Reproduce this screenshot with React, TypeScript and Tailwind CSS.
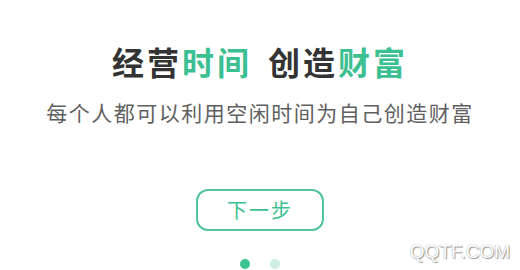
export default function App() {
  return (
    <div
      className="relative w-[520px] h-[270px] bg-white overflow-hidden flex flex-col items-center"
      style={{ fontFamily: '"Noto Sans CJK SC", "Noto Sans", sans-serif' }}
    >
      <h1 className="mt-[39px] text-[32px] leading-[44px] font-bold tracking-[3px] text-[#333333] whitespace-nowrap">
        经营<span className="text-[#3cbf91]">时间</span>
        <span className="inline-block w-[16px]" />
        创造<span className="text-[#3cbf91]">财富</span>
      </h1>
      <p className="mt-[14px] text-[21px] leading-[30px] tracking-[1.5px] text-[#606060] whitespace-nowrap">
        每个人都可以利用空闲时间为自己创造财富
      </p>
      <button className="mt-[62px] w-[128px] h-[42px] rounded-[12px] border-2 border-[#52c49c] text-[#3cbf91] text-[20px] tracking-[2px] flex items-center justify-center">
        下一步
      </button>
      <div className="mt-[28px] flex gap-[20px]">
        <span className="w-[10px] h-[10px] rounded-full bg-[#3cc392]" />
        <span className="w-[10px] h-[10px] rounded-full bg-[#cdeee1]" />
      </div>
      <span
        className="absolute right-[10px] bottom-[4px] text-[19px] text-white tracking-[0px]"
        style={{ fontFamily: '"Liberation Sans", sans-serif', textShadow: '0 0 1px #888, 1px 1px 1px #999' }}
      >
        QQTF.COM
      </span>
    </div>
  )
}
